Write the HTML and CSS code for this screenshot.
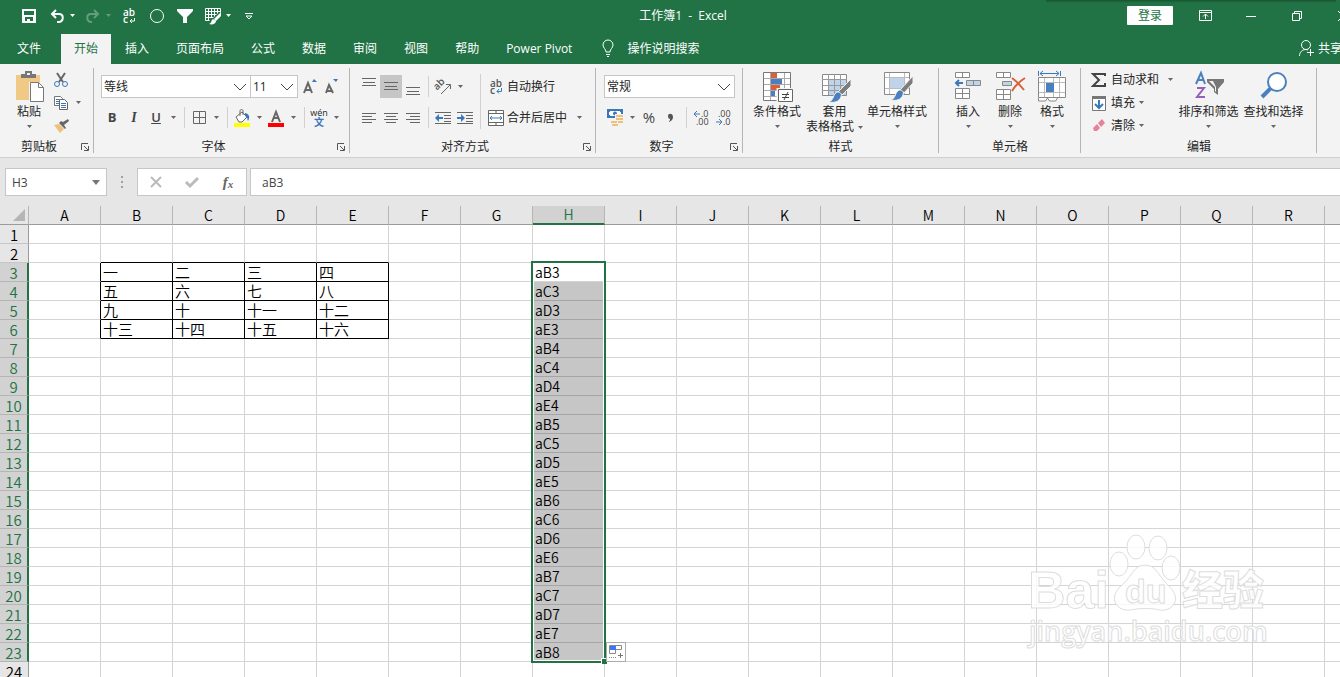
FILE: index.html
```html
<!DOCTYPE html>
<html lang="zh-CN">
<head>
    <meta charset="UTF-8">
    <meta name="viewport" content="width=device-width, initial-scale=1.0">
    <title>工作簿1 - Excel</title>
    <link rel="stylesheet" href="styles.css">
</head>
<body>
    <header class="top">
        <div class="titlebar">
            <div class="quick">
                <button class="tool" aria-label="保存"><svg width="16" height="16"><path class="w" fill-rule="evenodd" d="M1 1h14v14H1zM3 3v4h10V3zM4 9v4h2v-2h3v2h3V9z"/></svg></button>
                <div class="pair">
                    <button class="tool" aria-label="撤消"><svg width="16" height="16"><path class="wl" d="M3 6h7c5 0 5 7 0 8H8M7 2L3 6l4 4" stroke-width="2"/></svg></button>
                    <button class="drop slim" aria-label="撤消选项"><svg width="5" height="3"><path d="M0 0h5L2.500 3z"/></svg></button>
                </div>
                <div class="pair faded">
                    <button class="tool" aria-label="恢复"><svg width="16" height="16"><path class="wl" d="M13 6H6c-5 0-5 7 0 8h1M9 2l4 4-4 4" stroke-width="2"/></svg></button>
                    <button class="drop slim" aria-label="恢复选项"><svg width="5" height="3"><path d="M0 0h5L2.500 3z"/></svg></button>
                </div>
                <button class="tool" aria-label="自动换行"><svg width="16" height="16"><text class="w abc" x="2" y="8">ab</text><text class="w abc" x="2" y="15">c</text><path class="wl" d="M13.500 10v3H9M11 11l-2 2 2 2"/></svg></button>
                <button class="tool" aria-label="椭圆"><svg width="16" height="16"><circle class="wl" cx="8" cy="8" r="6.500"/></svg></button>
                <button class="tool" aria-label="筛选"><svg width="16" height="16"><path class="w" d="M0 1h16v2l-6 6v6H6V9L0 3z"/></svg></button>
                <div class="pair">
                    <button class="tool" aria-label="套用表格格式"><svg width="18" height="18"><path class="wl" d="M1.500 13.500v-12h15v4M1.500 4.500h15M1.500 7.500h11M1.500 10.500h8M4.500 1.500v12M7.500 1.500v9M10.500 1.500v8M13.500 1.500v5M1.500 13.500h4"/><path class="w" d="M17 5v4l-5 5-2-2zM9 12l3 2c0 3-4 4-7 3 3-1 2-4 4-5z"/></svg></button>
                    <button class="drop slim" aria-label="表格选项"><svg width="5" height="3"><path d="M0 0h5L2.500 3z"/></svg></button>
                </div>
                <button class="tool" aria-label="自定义快速访问工具栏"><svg width="10" height="8"><path class="wl" d="M1 1.500h8M2 4l3 3 3-3z"/></svg></button>
            </div>
            <div class="title">工作簿1&nbsp; -&nbsp; Excel</div>
            <div class="window-controls">
                <button class="login">登录</button>
                <button class="win" aria-label="功能区显示选项"><svg width="13" height="11"><path class="wl" d="M.500.500h12v10H.500zM.500 2.500h12M6.500 9V4M4 6.500L6.500 4 9 6.500"/></svg></button>
                <button class="win" aria-label="最小化"><svg width="10" height="10"><path class="wl" d="M0 5.500h10"/></svg></button>
                <button class="win" aria-label="向下还原"><svg width="10" height="10"><path class="wl" d="M.500 2.500h7v7h-7zM2.500 2V.500h7v7H8"/></svg></button>
                <button class="win" aria-label="关闭"><svg width="10" height="10"><path class="wl" d="M0 0l10 10M10 0L0 10"/></svg></button>
            </div>
        </div>
        <nav class="tabs">
            <button class="tab file">文件</button>
            <button class="tab active">开始</button>
            <button class="tab">插入</button>
            <button class="tab">页面布局</button>
            <button class="tab">公式</button>
            <button class="tab">数据</button>
            <button class="tab">审阅</button>
            <button class="tab">视图</button>
            <button class="tab">帮助</button>
            <button class="tab">Power Pivot</button>
            <button class="tab tell"><svg width="12" height="17"><path class="wl" d="M4 12c0-3-3-4-3-7a5 5 0 0 1 10 0c0 3-3 4-3 7zM4 14.500h4M5 16.500h2"/></svg>操作说明搜索</button>
            <button class="tab share"><svg width="15" height="16"><circle class="wl" cx="7" cy="5" r="4.500"/><path class="wl" d="M.500 16c0-4 3-6.500 6.500-6.500l2 .500M11.500 9v7M8 12.500h7"/></svg>共享</button>
        </nav>
    </header>

    <section class="ribbon">
        <div class="group clipboard">
            <div class="content">
                <button class="big">
                    <svg width="32" height="32"><path fill="#f0c987" d="M3 5h24v25H3z"/><path fill="#777" d="M8 8V4h4V1h7v3h4v4z"/><path fill="#f3f3f3" d="M14 3h3v2h-3z"/><path fill="#fff" stroke="#f3f3f3" stroke-width="3" d="M17.500 13.500h8l5 5v13h-13z"/><path fill="#fff" stroke="#777" d="M17.500 12.500h8l5 5v14h-13z"/><path fill="none" stroke="#777" d="M25.500 12.500v5h5"/></svg>
                    <span>粘贴</span>
                    <svg class="arrow" width="5" height="3"><path d="M0 0h5L2.500 3z"/></svg>
                </button>
                <div class="stack">
                    <button class="tool" aria-label="剪切"><svg width="16" height="16"><path fill="none" stroke="#666" stroke-width="2" d="M4 1l6 9M12 1L6 10"/><circle class="bl" cx="4" cy="12" r="2.500"/><circle class="bl" cx="12" cy="12" r="2.500"/></svg></button>
                    <div class="pair">
                        <button class="tool" aria-label="复制"><svg width="16" height="16"><path fill="#fff" stroke="#777" d="M1.500 1.500h6l2 2v7h-8z"/><path class="bl" d="M3 4.500h3M3 6.500h3M3 8.500h3"/><path fill="#fff" stroke="#666" d="M6.500 4.500h5l3 3v7h-8z"/><path class="bl" d="M8 8.500h5M8 10.500h5M8 12.500h5"/></svg></button>
                        <button class="drop" aria-label="复制选项"><svg width="5" height="3"><path d="M0 0h5L2.500 3z"/></svg></button>
                    </div>
                    <button class="tool" aria-label="格式刷"><svg width="17" height="16"><path fill="#eec07b" d="M1 7l5-1 5 5-4 4z"/><path fill="#666" d="M6 5l6 6 1-1-2-3 5-4-1-2-5 3-2-1z"/></svg></button>
                </div>
            </div>
            <div class="label"><span>剪贴板</span><button class="launch" aria-label="剪贴板设置"><svg width="8" height="8"><path d="M.500 7V.500H7M3 3l4 4M7.500 3v4.500H3"/></svg></button></div>
        </div>

        <div class="group font">
            <div class="content rows">
                <div class="row">
                    <label class="combo family"><select aria-label="字体"><option>等线</option></select><svg width="14" height="8"><path d="M1 1l6 6 6-6"/></svg></label>
                    <label class="combo size"><select aria-label="字号"><option>11</option></select><svg width="14" height="8"><path d="M1 1l6 6 6-6"/></svg></label>
                    <button class="tool" aria-label="增大字号"><svg width="16" height="18"><path fill="none" stroke="#666" stroke-width="2" d="M3 15L7 5l4 10M4 12h6"/><path fill="#3b78b9" d="M11 4l2-3 3 3z"/></svg></button>
                    <button class="tool" aria-label="减小字号"><svg width="16" height="18"><path fill="none" stroke="#666" stroke-width="2" d="M3 15L6 7l4 8M4 13h5"/><path fill="#3b78b9" d="M10 1h5l-2 3z"/></svg></button>
                </div>
                <div class="row">
                    <button class="tool letter bold">B</button>
                    <button class="tool letter italic">I</button>
                    <button class="tool letter under">U</button>
                    <button class="drop" aria-label="下划线"><svg width="5" height="3"><path d="M0 0h5L2.500 3z"/></svg></button>
                    <i class="sep"></i>
                    <button class="tool" aria-label="边框"><svg width="13" height="13"><path class="gl" d="M.500.500h12v12H.500zM6.500 0v13M0 6.500h13"/></svg></button>
                    <button class="drop" aria-label="边框选项"><svg width="5" height="3"><path d="M0 0h5L2.500 3z"/></svg></button>
                    <i class="sep"></i>
                    <button class="tool" aria-label="填充颜色"><svg width="16" height="18"><path fill="#fff" stroke="#666" d="M2 8l6-5 5 5-5 5H5z"/><path fill="none" stroke="#666" d="M6 7V2c0-2 3-2 3 0v4"/><path fill="#3b78b9" d="M11 4c5 1 5 5 3 8-1-2 0-4-3-5z"/><path fill="#ff0" d="M0 14h16v4H0z"/></svg></button>
                    <button class="drop" aria-label="填充选项"><svg width="5" height="3"><path d="M0 0h5L2.500 3z"/></svg></button>
                    <button class="tool" aria-label="字体颜色"><svg width="16" height="18"><path fill="none" stroke="#666" stroke-width="2" d="M4 13L8 3l4 10M5 9h6"/><path fill="red" d="M0 14h16v4H0z"/></svg></button>
                    <button class="drop" aria-label="颜色选项"><svg width="5" height="3"><path d="M0 0h5L2.500 3z"/></svg></button>
                    <i class="sep"></i>
                    <button class="tool phonetic"><span>wén</span><b>文</b></button>
                    <button class="drop" aria-label="拼音选项"><svg width="5" height="3"><path d="M0 0h5L2.500 3z"/></svg></button>
                </div>
            </div>
            <div class="label"><span>字体</span><button class="launch" aria-label="字体设置"><svg width="8" height="8"><path d="M.500 7V.500H7M3 3l4 4M7.500 3v4.500H3"/></svg></button></div>
        </div>

        <div class="group align">
            <div class="content">
                <div class="rows">
                    <div class="row">
                        <button class="tool" aria-label="顶端对齐"><svg width="14" height="18"><path class="gl" d="M0 .500h14M1 4.500h12M0 7.500h14"/></svg></button>
                        <button class="tool on" aria-label="垂直居中"><svg width="14" height="18"><path class="gl" d="M0 4.500h14M1 8.500h12M0 11.500h14"/></svg></button>
                        <button class="tool" aria-label="底端对齐"><svg width="14" height="18"><path class="gl" d="M0 9.500h14M1 13.500h12M0 16.500h14"/></svg></button>
                        <i class="sep tall"></i>
                        <button class="tool" aria-label="方向"><svg width="18" height="18"><text class="abc" fill="#555" transform="rotate(-45 5 12)" x="3" y="11">ab</text><path class="gl" d="M7 16L16 7M12 6.500h4.500V11"/></svg></button>
                        <button class="drop" aria-label="方向选项"><svg width="5" height="3"><path d="M0 0h5L2.500 3z"/></svg></button>
                    </div>
                    <div class="row">
                        <button class="tool" aria-label="左对齐"><svg width="14" height="12"><path class="gl" d="M0 1.500h14M0 4.500h10M0 7.500h14M0 10.500h10"/></svg></button>
                        <button class="tool" aria-label="居中"><svg width="14" height="12"><path class="gl" d="M0 1.500h14M2 4.500h10M0 7.500h14M2 10.500h10"/></svg></button>
                        <button class="tool" aria-label="右对齐"><svg width="14" height="12"><path class="gl" d="M0 1.500h14M4 4.500h10M0 7.500h14M4 10.500h10"/></svg></button>
                        <i class="sep tall"></i>
                        <button class="tool" aria-label="减少缩进量"><svg width="16" height="14"><path class="gl" d="M0 1.500h16M9 4.500h7M9 7.500h7M9 10.500h7M0 12.500h16"/><path fill="#3b78b9" d="M0 7l4-4v3h4v2H4v3z"/></svg></button>
                        <button class="tool" aria-label="增加缩进量"><svg width="16" height="14"><path class="gl" d="M0 1.500h16M9 4.500h7M9 7.500h7M9 10.500h7M0 12.500h16"/><path fill="#3b78b9" d="M8 7L4 3v3H0v2h4v3z"/></svg></button>
                    </div>
                </div>
                <i class="sep full"></i>
                <div class="rows">
                    <button class="row wide"><svg width="16" height="16"><text class="abc" fill="#555" x="2" y="8">ab</text><text class="abc" fill="#555" x="2" y="15">c</text><path class="bl" d="M13.500 9v3.500H9M11 10l-2 2.500 2 2"/></svg>自动换行</button>
                    <div class="row">
                        <button class="row wide"><svg width="16" height="16"><path fill="#fff" stroke="#666" d="M.500.500h15v15H.500z"/><path class="gl" d="M.500 3.500h15M.500 12.500h15M8 0v3M8 13v3"/><path class="bl" d="M2 8h12M4 6L2 8l2 2M12 6l2 2-2 2"/></svg>合并后居中</button>
                        <button class="drop" aria-label="合并选项"><svg width="5" height="3"><path d="M0 0h5L2.500 3z"/></svg></button>
                    </div>
                </div>
            </div>
            <div class="label"><span>对齐方式</span><button class="launch" aria-label="对齐设置"><svg width="8" height="8"><path d="M.500 7V.500H7M3 3l4 4M7.500 3v4.500H3"/></svg></button></div>
        </div>

        <div class="group number">
            <div class="content rows">
                <label class="combo format"><select aria-label="数字格式"><option>常规</option></select><svg width="14" height="8"><path d="M1 1l6 6 6-6"/></svg></label>
                <div class="row">
                    <button class="tool" aria-label="会计数字格式"><svg width="17" height="17"><path fill="#3b78b9" d="M0 0h16v9H0z"/><path fill="#fff" d="M3 2h10v1h1v3h-1v1H3V6H2V3h1z"/><circle cx="8" cy="4.500" r="2" fill="#3b78b9"/><path fill="#f3f3f3" d="M8 5h9v9h-5v3H3v-6h5z"/><path fill="#eec07b" d="M9 6h7v2H9zM9 9h7v2H9zM11 12h5v2h-5zM4 12h6v2H4zM5 15h6v2H5z"/></svg></button>
                    <button class="drop" aria-label="会计选项"><svg width="5" height="3"><path d="M0 0h5L2.500 3z"/></svg></button>
                    <button class="tool letter percent">%</button>
                    <button class="tool" aria-label="千位分隔样式"><svg width="6" height="8"><path fill="#555" d="M0 2c0-3 5-3 5 1 0 3-2 4-4 5v-1c1 0 1-1 1-2C1 5 0 4 0 2z"/></svg></button>
                    <i class="sep"></i>
                    <button class="tool" aria-label="增加小数位数"><svg width="16" height="16"><text class="dec" x="8" y="7">.0</text><text class="dec" x="3" y="15">.00</text><path class="bl" d="M1 4h6M4 1L1 4l3 3"/></svg></button>
                    <button class="tool" aria-label="减少小数位数"><svg width="16" height="16"><text class="dec" x="3" y="7">.00</text><text class="dec" x="8" y="15">.0</text><path class="bl" d="M1 12h6M4 9l3 3-3 3"/></svg></button>
                </div>
            </div>
            <div class="label"><span>数字</span><button class="launch" aria-label="数字设置"><svg width="8" height="8"><path d="M.500 7V.500H7M3 3l4 4M7.500 3v4.500H3"/></svg></button></div>
        </div>

        <div class="group style">
            <div class="content">
                <button class="big">
                    <svg width="32" height="32"><path fill="#fff" stroke="#777" d="M2.500 2.500h27v28h-27z"/><path stroke="#aaa" d="M3 8.500h26M3 14.500h26M3 20.500h26M3 26.500h26M9.500 3v27M23.500 3v27"/><path fill="#d9603b" d="M10 3h6v5h-6zM10 15h9v5h-9z"/><path fill="#4a80bd" d="M10 9h11v5H10zM10 21h4v5h-4z"/><path fill="#fff" stroke="#f3f3f3" stroke-width="3" d="M17 19.500h14v12H17z"/><path fill="#fff" stroke="#666" d="M17.500 19.500h14v12h-14z"/><path stroke="#444" d="M21 24.500h7M21 27.500h7M27 22l-4 8"/></svg>
                    <span>条件格式</span>
                    <svg class="arrow" width="5" height="3"><path d="M0 0h5L2.500 3z"/></svg>
                </button>
                <button class="big">
                    <svg width="32" height="32"><path fill="#fff" stroke="#888" d="M3.500 4.500h24v21h-24z"/><path fill="#bfd3ea" d="M10 10h17v15H10z"/><path stroke="#999" d="M3 9.500h25M3 15.500h25M3 20.500h25M9.500 4v21M15.500 4v21M21.500 4v21"/><path fill="#7d7d7d" stroke="#f3f3f3" d="M32 9v7l-9 9-4-3z"/><path fill="#4a80bd" stroke="#f3f3f3" d="M18 22c4 0 5 2 4 5-2 5-7 6-12 5 5-2 4-8 8-10z"/></svg>
                    <span>套用</span>
                    <span>表格格式<svg class="inline-arrow" width="5" height="3"><path d="M0 0h5L2.500 3z"/></svg></span>
                </button>
                <button class="big">
                    <svg width="32" height="32"><path fill="#fff" stroke="#888" d="M3.500 2.500h25v22h-25z"/><path stroke="#bbb" d="M4 7.500h24M4 18.500h24M8.500 3v21M23.500 3v21"/><path fill="#bfd3ea" d="M9 8h14v10H9z"/><path fill="#7d7d7d" stroke="#f3f3f3" d="M32 6v7l-9 10-4-3z"/><path fill="#4a80bd" stroke="#f3f3f3" d="M18 20c4 0 5 2 4 5-2 5-7 6-12 5 5-2 4-8 8-10z"/></svg>
                    <span>单元格样式</span>
                    <svg class="arrow" width="5" height="3"><path d="M0 0h5L2.500 3z"/></svg>
                </button>
            </div>
            <div class="label"><span>样式</span></div>
        </div>

        <div class="group cells">
            <div class="content">
                <button class="big">
                    <svg width="32" height="32"><path fill="#fff" stroke="#888" d="M3.500 2.500h14v5h-14zM10.500 2.500v5M3.500 18.500h14v10h-14zM3.500 23.500h14M10.500 18.500v10"/><path fill="#bfd3ea" stroke="#888" d="M14.500 10.500h14v5h-14zM21.500 10.500v5"/><path fill="none" stroke="#3b78b9" stroke-width="2" d="M4 13h7M7 10l-3 3 3 3"/></svg>
                    <span>插入</span>
                    <svg class="arrow" width="5" height="3"><path d="M0 0h5L2.500 3z"/></svg>
                </button>
                <button class="big">
                    <svg width="32" height="32"><path fill="#fff" stroke="#888" d="M2.500 2.500h14v5h-14zM9.500 2.500v5M2.500 19.500h14v10h-14zM2.500 24.500h14M9.500 19.500v10"/><path fill="#bfd3ea" stroke="#888" d="M8.500 11.500h9v4h-9z"/><path fill="none" stroke="#d9603b" stroke-width="2" d="M18 8c4 3 9 8 12 12M31 8c-5 3-10 8-13 13"/></svg>
                    <span>删除</span>
                    <svg class="arrow" width="5" height="3"><path d="M0 0h5L2.500 3z"/></svg>
                </button>
                <button class="big">
                    <svg width="32" height="32"><path fill="none" stroke="#3b78b9" d="M2.500 1v5M24.500 1v5M4 3.500h19M7 1L4 3.500 7 6M20 1l3 2.500L20 6"/><path fill="#fff" stroke="#888" d="M2.500 7.500h27v20h-27zM2.500 28v3h7l2-3 2 3h6l2-3"/><path stroke="#bbb" d="M3 12.500h26M3 22.500h26M8.500 8v19M17.500 8v5M17.500 23v4M23.500 8v19"/><path fill="#4a80bd" d="M10 13h8v9h-8z"/></svg>
                    <span>格式</span>
                    <svg class="arrow" width="5" height="3"><path d="M0 0h5L2.500 3z"/></svg>
                </button>
            </div>
            <div class="label"><span>单元格</span></div>
        </div>

        <div class="group edit">
            <div class="content">
                <div class="stack">
                    <div class="row">
                        <button class="row wide"><svg width="16" height="16"><path fill="none" stroke="#444" stroke-width="2" d="M14 4V2H2l6 6-6 6h12v-3"/></svg>自动求和</button>
                        <button class="drop" aria-label="求和选项"><svg width="5" height="3"><path d="M0 0h5L2.500 3z"/></svg></button>
                    </div>
                    <button class="row wide"><svg width="16" height="16"><path fill="#fff" stroke="#777" d="M1.500 1.500h13v14h-13z"/><path fill="#777" d="M1 1h14v3H1z"/><path fill="none" stroke="#3b78b9" stroke-width="2" d="M8 5v8M4 9l4 4 4-4"/></svg>填充<svg class="inline-arrow" width="5" height="3"><path d="M0 0h5L2.500 3z"/></svg></button>
                    <button class="row wide"><svg width="16" height="16"><path fill="#e8829a" d="M7 5l4-4 3 4-4 4zM6 6l3 4-3 3H3L2 10z"/></svg>清除<svg class="inline-arrow" width="5" height="3"><path d="M0 0h5L2.500 3z"/></svg></button>
                </div>
                <button class="big">
                    <svg width="32" height="32"><path fill="none" stroke="#4a80bd" stroke-width="2" d="M3 14L8 3l4 11M4 10h7"/><path fill="none" stroke="#9660ba" stroke-width="2" d="M4 18h7L4 27h8"/><path fill="#777" d="M14 9h17v3l-6 7v6l-4-3v-3l-7-7z"/><path fill="#f3f3f3" d="M16 11h4l3 6v5l-1-1v-4z"/></svg>
                    <span>排序和筛选</span>
                    <svg class="arrow" width="5" height="3"><path d="M0 0h5L2.500 3z"/></svg>
                </button>
                <button class="big">
                    <svg width="32" height="32"><circle cx="19" cy="12" r="9" fill="#fff" stroke="#4a80bd" stroke-width="2"/><path stroke="#4a80bd" stroke-width="4" d="M13 18L4 27"/></svg>
                    <span>查找和选择</span>
                    <svg class="arrow" width="5" height="3"><path d="M0 0h5L2.500 3z"/></svg>
                </button>
            </div>
            <div class="label"><span>编辑</span></div>
        </div>
    </section>

    <section class="formula-bar">
        <label class="name-box"><input type="text" value="H3" aria-label="名称框"><svg width="8" height="5"><path d="M0 0h8L4 5z"/></svg></label>
        <svg class="grip" width="2" height="12"><path fill="#a0a0a0" d="M0 0h2v2H0zM0 5h2v2H0zM0 10h2v2H0z"/></svg>
        <div class="entry">
            <button aria-label="取消"><svg width="12" height="12"><path stroke="#bbb" stroke-width="2" d="M1 1l10 10M11 1L1 11"/></svg></button>
            <button aria-label="输入"><svg width="14" height="12"><path fill="none" stroke="#bbb" stroke-width="3" d="M1 6l4 4 8-8"/></svg></button>
            <button class="fx" aria-label="插入函数">f<small>x</small></button>
        </div>
        <input class="formula" type="text" value="aB3" aria-label="编辑栏">
    </section>

    <main class="sheet">
        <table class="grid">
            <thead><tr id="columns"></tr></thead>
            <tbody id="rows"></tbody>
        </table>
        <svg class="watermark" width="250" height="120">
            <g class="mark">
                <text class="latin" x="3" y="78">Bai</text>
                <ellipse cx="94" cy="34" rx="9" ry="12"/>
                <ellipse cx="111" cy="17" rx="9" ry="12"/>
                <ellipse cx="133" cy="18" rx="9" ry="12"/>
                <ellipse cx="146" cy="38" rx="9" ry="12"/>
                <path d="M120 35c11 0 13 10 21 18s11 13 9 19-9 9-15 8c-8-2-21-2-29 0-7 1-14-2-16-8s1-12 9-19 10-18 21-18z"/>
                <text class="du" x="100" y="73">du</text>
                <text class="cjk" x="157" y="75">经验</text>
                <text class="url" x="4" y="111">jingyan.baidu.com</text>
            </g>
        </svg>
    </main>

    <script>
        const letters = 'ABCDEFGHIJKLMNOPQRS'.split('');
        const numbers = {
            3: ['一', '二', '三', '四'],
            4: ['五', '六', '七', '八'],
            5: ['九', '十', '十一', '十二'],
            6: ['十三', '十四', '十五', '十六']
        };

        // Header row
        let head = '<th class="corner"><svg width="12" height="12"><path d="M12 0v12H0z"/></svg></th>';
        letters.forEach(l => {
            head += `<th class="col${l === 'H' ? ' picked' : ''}">${l}</th>`;
        });
        document.getElementById('columns').innerHTML = head;

        // Column H lists the addresses B..E, row after row, starting at aB3
        function address(row) {
            const i = row - 3;
            return 'a' + 'BCDE'[i % 4] + (3 + Math.floor(i / 4));
        }

        let body = '';
        for (let r = 1; r <= 24; r++) {
            const picked = r >= 3 && r <= 23;
            body += `<tr><th class="num${picked ? ' picked' : ''}">${r}</th>`;
            letters.forEach((l, c) => {
                const classes = [];
                let text = '';
                if (r >= 3 && r <= 6 && c <= 4) classes.push('line-right');
                if (r >= 2 && r <= 6 && c >= 1 && c <= 4) classes.push('line-bottom');
                if (numbers[r] && c >= 1 && c <= 4) {
                    classes.push('numeral');
                    text = numbers[r][c - 1];
                }
                if (l === 'H' && picked) {
                    classes.push(r === 3 ? 'current' : 'selected');
                    text = address(r);
                }
                if (r === 3 && l === 'H') {
                    text += '<div class="selection"><i class="handle"></i><button class="fill-options" aria-label="自动填充选项">' +
                        '<svg width="16" height="16"><path fill="#fff" stroke="#888" d="M1.500 1.500h12v4h-12zM1.500 5.500h6v4h-6z"/><path fill="#3a78f2" d="M2 2h6v4H2z"/>' +
                        '<path stroke="#888" stroke-dasharray="1 1" d="M1 13.500h7"/><path stroke="#777" d="M10 11.500h5M12.500 9v5"/></svg></button></div>';
                }
                body += `<td class="${classes.join(' ')}">${text}</td>`;
            });
            body += '</tr>';
        }
        document.getElementById('rows').innerHTML = body;
    </script>
</body>
</html>
```
FILE: styles.css
```css
* {
    box-sizing: border-box;
}

body {
    margin: 0;
    height: 100vh;
    display: flex;
    flex-direction: column;
    overflow: hidden;
    font-family: "Open Sans", "Noto Sans CJK SC", sans-serif;
    font-size: 12px;
    line-height: 15px;
    color: #262626;
    background: #e6e6e6;
}

button, input, select {
    font: inherit;
    color: inherit;
    border: 0;
    padding: 0;
    margin: 0;
    background: none;
    border-radius: 0;
}

button {
    display: flex;
    align-items: center;
    justify-content: center;
    white-space: nowrap;
}

svg {
    display: block;
    flex: none;
    overflow: visible;
}

/* icon strokes and fills */
.w { fill: #fff; }
.wl { fill: none; stroke: #fff; }
.bl { fill: none; stroke: #3b78b9; }
.gl { fill: none; stroke: #666; }

.abc {
    font-size: 10px;
    font-weight: 600;
}

.dec {
    font-size: 9px;
    fill: #444;
}

/* title bar and tabs */
.top {
    background: #217346;
    color: #fff;
    overflow: hidden;
}

.titlebar {
    display: grid;
    grid-template-columns: 1fr auto 1fr;
    align-items: center;
    height: 34px;
    margin-right: -26px;
    padding-bottom: 3px;
    background: linear-gradient(#18532f, transparent) right 30px top / 290px 3px no-repeat;
}

.quick {
    display: flex;
    gap: 6px;
    padding-left: 18px;
}

.pair {
    display: flex;
}

.faded {
    opacity: 0.3;
}

.tool {
    width: 22px;
    height: 23px;
}

.drop {
    width: 12px;
    height: 23px;
}

.slim {
    width: 8px;
}

.drop svg, .arrow, .inline-arrow {
    fill: #666;
}

.top .drop svg {
    fill: #fff;
}

.window-controls {
    display: flex;
    justify-content: flex-end;
    align-items: center;
}

.login {
    width: 46px;
    height: 19px;
    margin-right: 9px;
    background: #fff;
    color: #217346;
    border-radius: 1px;
}

.win {
    width: 46px;
    height: 30px;
}

.tabs {
    display: flex;
    gap: 1px;
    height: 30px;
}

.tab {
    padding: 0 13px 2px;
}

.file {
    padding: 0 19px 2px 17px;
}

.active {
    background: #f3f3f3;
    color: #217346;
}

.tell {
    gap: 13px;
    padding: 0 16px 2px;
}

.share {
    gap: 4px;
    padding: 0 0 2px;
    margin-left: auto;
    margin-right: -2px;
}

/* ribbon */
.ribbon {
    display: flex;
    padding: 4px 0;
    background: #f3f3f3;
    border-bottom: 1px solid #cfcfcf;
}

.group {
    display: flex;
    flex-direction: column;
    flex: none;
    height: 85px;
    padding-left: 8px;
    border-right: 1px solid #b5b5b5;
}

.clipboard { width: 94px; }
.font { width: 256px; padding-left: 7px; }
.align { width: 246px; }
.number { width: 147px; }
.style { width: 196px; padding-left: 7px; }
.cells { width: 142px; }
.edit { width: 236px; }

.content {
    display: flex;
    flex: none;
    height: 71px;
}

.rows {
    display: flex;
    flex-direction: column;
    align-items: flex-start;
    gap: 8px;
    padding-top: 7px;
}

.content > .rows {
    height: 61px;
}

.row {
    display: flex;
    align-items: center;
    height: 23px;
}

.stack {
    display: flex;
    flex-direction: column;
    align-items: flex-start;
}

.wide {
    gap: 3px;
    padding: 0 6px 0 4px;
}

.edit .wide {
    gap: 4px;
    padding: 0 5px 0 2px;
}

.inline-arrow {
    display: inline-block;
    vertical-align: middle;
    margin-left: 4px;
}

.wide .inline-arrow {
    margin-left: 0;
}

.big {
    flex-direction: column;
    justify-content: flex-start;
    min-width: 42px;
    height: 71px;
    padding-top: 2px;
}

.big > span:first-of-type {
    margin-top: 2px;
}

.style .big {
    min-width: 54px;
    padding-left: 2px;
    padding-right: 2px;
}

.edit .big {
    min-width: 65px;
}

.arrow {
    margin-top: 6px;
}

.label {
    display: flex;
    flex: none;
    align-items: center;
    height: 15px;
    margin-left: -7px;
}

.label span {
    flex: 1;
    text-align: center;
}

.launch {
    width: 16px;
    height: 15px;
}

.launch svg {
    fill: none;
    stroke: #555;
}

.combo {
    display: grid;
    align-items: center;
    height: 23px;
    background: #fff;
    border: 1px solid #c6c6c6;
}

.combo select, .combo svg {
    grid-area: 1 / 1;
}

.combo select {
    appearance: none;
    height: 21px;
    padding-left: 2px;
    outline: 0;
}

.combo svg {
    justify-self: end;
    margin-right: 3px;
    fill: none;
    stroke: #444;
    pointer-events: none;
}

.family { width: 150px; }
.size { width: 48px; margin-left: -1px; }
.format { width: 131px; }

.sep {
    width: 1px;
    height: 21px;
    margin: 0 3px 0 5px;
    background: #d0d0d0;
}

.number .sep, .align .sep {
    margin-left: 4px;
}

.align .full {
    height: 55px;
    margin-top: 6px;
}

.letter {
    color: #444;
    font-size: 13px;
}

.bold { font-weight: 700; }
.italic { font-family: "Liberation Serif", serif; font-style: italic; font-weight: 700; font-size: 14px; }
.under { font-weight: 600; text-decoration: underline; }
.percent { font-size: 15px; }

.on {
    background: #c6c6c6;
}

.phonetic {
    flex-direction: column;
    font-size: 9px;
    line-height: 8px;
}

.phonetic b {
    color: #3b78b9;
    font-size: 10px;
    line-height: 10px;
}

/* formula bar */
.formula-bar {
    display: flex;
    align-items: center;
    padding: 10px 0 10px 5px;
    color: #444;
}

.name-box, .entry, .formula {
    height: 28px;
    background: #fff;
    border: 1px solid #c6c6c6;
}

.name-box {
    display: flex;
    align-items: center;
    width: 102px;
    padding: 0 6px;
}

.name-box input {
    flex: 1;
    min-width: 0;
}

.name-box svg {
    fill: #777;
}

.grip {
    margin: 0 14px;
}

.entry {
    display: flex;
    width: 110px;
    margin-right: 3px;
}

.entry button {
    flex: 1;
}

.fx {
    color: #666;
    font-family: "Liberation Serif", serif;
    font-style: italic;
    font-weight: 700;
    font-size: 15px;
}

.fx small {
    font-size: 11px;
    padding-top: 4px;
}

.formula {
    flex: 1;
    padding: 0 11px;
    border-right: 0;
}

/* sheet */
.sheet {
    position: relative;
    flex: 1;
    min-height: 0;
    overflow: hidden;
    font-family: "Noto Sans CJK SC", sans-serif;
    color: #000;
}

.grid {
    table-layout: fixed;
    width: 1397px;
    border-collapse: separate;
    border-spacing: 0;
    background: #fff;
}

.grid th, .grid td {
    height: 19px;
    padding: 0;
    font-size: 14px;
    font-weight: 350;
    line-height: 18px;
    white-space: nowrap;
}

.grid th {
    background: #e6e6e6;
    font-size: 15px;
    line-height: 17px;
}

.grid td {
    padding-left: 2px;
    border-right: 1px solid #d4d4d4;
    border-bottom: 1px solid #d4d4d4;
}

.grid .numeral {
    font-size: 15px;
}

.grid .corner {
    width: 29px;
    border-right: 1px solid #b5b5b5;
    border-bottom: 1px solid #9b9b9b;
}

.corner svg {
    margin-left: 13px;
    fill: #b5b5b5;
}

.grid .col {
    width: 72px;
    border-right: 1px solid #b5b5b5;
    border-bottom: 1px solid #9b9b9b;
    font-size: 14px;
}

.grid .num {
    border-right: 1px solid #9b9b9b;
    border-bottom: 1px solid #c6c6c6;
}

.grid .picked {
    background: #d2d2d2;
    color: #217346;
}

.grid .col.picked {
    border-bottom: 2px solid #217346;
}

.grid .num.picked {
    border-right: 2px solid #217346;
    border-bottom-color: #b5b5b5;
}

.grid .line-right {
    border-right-color: #000;
}

.grid .line-bottom {
    border-bottom-color: #000;
}

.grid .selected {
    background: #c6c6c6;
    border-bottom-color: #a5a5a5;
}

.current {
    position: relative;
}

.selection {
    position: absolute;
    top: -2px;
    left: -2px;
    width: 75px;
    height: 402px;
    border: 2px solid #217346;
    box-shadow: inset 0 0 0 1px #fff;
}

.handle {
    position: absolute;
    right: -3px;
    bottom: -3px;
    width: 6px;
    height: 6px;
    background: #217346;
    border: solid #fff;
    border-width: 1px 0 0 1px;
}

.fill-options {
    position: absolute;
    left: 73px;
    bottom: -1px;
    width: 20px;
    height: 20px;
    background: #fff;
    border: 1px solid #ababab;
}

.watermark {
    position: absolute;
    right: 65px;
    bottom: 27px;
    pointer-events: none;
}

.mark {
    fill: rgba(255, 255, 255, 0.8);
    stroke: #ddd;
}

.latin {
    font: 700 52px "Liberation Sans", sans-serif;
}

.du {
    font: 700 34px "Liberation Sans", sans-serif;
}

.cjk {
    font: 900 41px "Noto Sans CJK SC", sans-serif;
}

.url {
    font: 600 27px "Open Sans", sans-serif;
}
```
